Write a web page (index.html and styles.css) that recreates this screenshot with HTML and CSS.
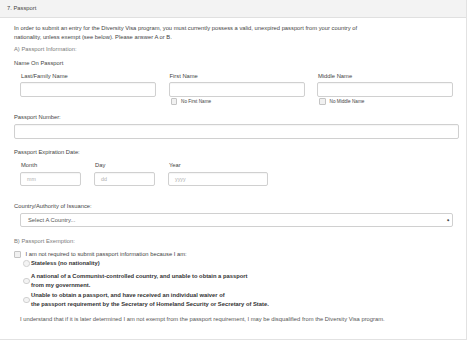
FILE: index.html
```html
<!DOCTYPE html>
<html>
<head>
<meta charset="utf-8">
<link rel="stylesheet" href="styles.css">
</head>
<body>
<div class="panel">
  <div class="panel-head">7. Passport</div>
  <div class="panel-body">
    <p class="intro">In order to submit an entry for the Diversity Visa program, you must currently possess a valid, unexpired passport from your country of<br>nationality, unless exempt (see below). Please answer A or B.</p>
    <div class="section-title">A) Passport Information:</div>
    <div class="group-label name-on">Name On Passport</div>
    <div class="name-grid">
      <div class="field">
        <div class="label">Last/Family Name</div>
        <div class="input"></div>
      </div>
      <div class="field">
        <div class="label">First Name</div>
        <div class="input"></div>
        <div class="check-row"><span class="check"></span><span>No First Name</span></div>
      </div>
      <div class="field">
        <div class="label">Middle Name</div>
        <div class="input"></div>
        <div class="check-row"><span class="check"></span><span>No Middle Name</span></div>
      </div>
    </div>
    <div class="group-label pn-label">Passport Number:</div>
    <div class="input wide"></div>
    <div class="group-label exp-label">Passport Expiration Date:</div>
    <div class="date-row">
      <div class="field month">
        <div class="label">Month</div>
        <div class="input small"><span class="ph">mm</span></div>
      </div>
      <div class="field day">
        <div class="label">Day</div>
        <div class="input small"><span class="ph">dd</span></div>
      </div>
      <div class="field year">
        <div class="label">Year</div>
        <div class="input small"><span class="ph">yyyy</span></div>
      </div>
    </div>
    <div class="group-label country-label">Country/Authority of Issuance:</div>
    <div class="select"><span>Select A Country...</span><span class="arrow">&#x25C6;</span></div>
    <div class="section-title exempt-title">B) Passport Exemption:</div>
    <div class="exempt-row"><span class="check"></span><span>I am not required to submit passport information because I am:</span></div>
    <div class="radio-list">
      <div class="radio-item r1"><span class="radio"></span><span class="bold">Stateless (no nationality)</span></div>
      <div class="radio-item r2"><span class="radio"></span><span class="bold">A national of a Communist-controlled country, and unable to obtain a passport<br>from my government.</span></div>
      <div class="radio-item r3"><span class="radio"></span><span class="bold">Unable to obtain a passport, and have received an individual waiver of<br>the passport requirement by the Secretary of Homeland Security or Secretary of State.</span></div>
    </div>
    <p class="understand">I understand that if it is later determined I am not exempt from the passport requirement, I may be disqualified from the Diversity Visa program.</p>
  </div>
</div>
</body>
</html>
```
FILE: styles.css
```css
html, body {
  margin: 0;
  padding: 0;
  background: #ffffff;
}
body {
  font-family: "Liberation Sans", Arial, sans-serif;
  font-size: 5.8px;
  color: #333333;
  width: 474px;
  height: 342px;
  overflow: hidden;
}
.panel {
  width: 467px;
  height: 340px;
  border-right: 1px solid #e2e2e2;
  border-bottom: 1px solid #e2e2e2;
  box-sizing: border-box;
}
.panel-head {
  height: 18px;
  box-sizing: border-box;
  background: #f3f3f3;
  border-bottom: 1px solid #e0e0e0;
  padding-left: 7px;
  line-height: 17px;
  color: #444;
}
.panel-body {
  padding: 5.5px 7px 0 14px;
}
p { margin: 0; }
.intro {
  line-height: 9px;
  white-space: nowrap;
  color: #444;
}
.section-title {
  margin-top: 3px;
  line-height: 9px;
  color: #7a7a7a;
}
.group-label {
  line-height: 9px;
  color: #444;
}
.name-on { margin-top: 5px; }
.name-grid {
  margin-top: 4px;
  padding-left: 6px;
  display: grid;
  grid-template-columns: 136px 136px 136px;
  column-gap: 12.5px;
}
.label {
  line-height: 9px;
  padding-left: 1px;
  color: #444;
}
.input {
  margin-top: 1.5px;
  height: 15px;
  box-sizing: border-box;
  border: 1px solid #d0d0d0;
  border-radius: 2px;
  background: #fff;
  box-shadow: inset 0 1px 1px rgba(0,0,0,0.04);
}
.check-row {
  display: flex;
  align-items: center;
  gap: 4px;
  line-height: 9px;
  font-size: 4.7px;
  padding-left: 2px;
  color: #444;
}
.check {
  display: inline-block;
  width: 4.5px;
  height: 4.5px;
  border: 1px solid #c4c4c4;
  border-radius: 1px;
  background: #f1f1f1;
}
.pn-label { margin-top: 7px; }
.input.wide {
  width: 445px;
}
.exp-label { margin-top: 9.5px; }
.date-row {
  margin-top: 4px;
  padding-left: 6px;
  display: flex;
  gap: 13px;
}
.month, .day { width: 61px; }
.year { width: 100px; }
.input.small {
  height: 14.5px;
  padding-left: 6px;
  line-height: 12.5px;
}
.ph { color: #b0b0b0; font-size: 5.3px; }
.country-label { margin-top: 16px; }
.select {
  margin-top: 1.5px;
  margin-left: 6px;
  width: 433px;
  height: 14.5px;
  box-sizing: border-box;
  border: 1px solid #d0d0d0;
  border-radius: 2px;
  padding: 0 3px 0 7px;
  display: flex;
  align-items: center;
  justify-content: space-between;
  color: #555;
}
.arrow {
  font-size: 3px;
  color: #444;
}
.exempt-title { margin-top: 10px; }
.exempt-row {
  margin-top: 4px;
  display: flex;
  align-items: center;
  gap: 5px;
  line-height: 9px;
  color: #444;
}
.radio-list {
  padding-left: 9px;
}
.radio-item {
  display: flex;
  align-items: center;
  gap: 1.5px;
  line-height: 9px;
}
.r2 { margin-top: 4px; }
.r3 { margin-top: 1px; }
.radio {
  flex: none;
  display: inline-block;
  width: 4.5px;
  height: 4.5px;
  border: 1px solid #d0d0d0;
  border-radius: 50%;
  background: #f4f4f4;
}
.bold {
  font-weight: bold;
  color: #333;
}
.understand {
  margin-top: 6px;
  padding-left: 6px;
  line-height: 9px;
  color: #555;
}
```
